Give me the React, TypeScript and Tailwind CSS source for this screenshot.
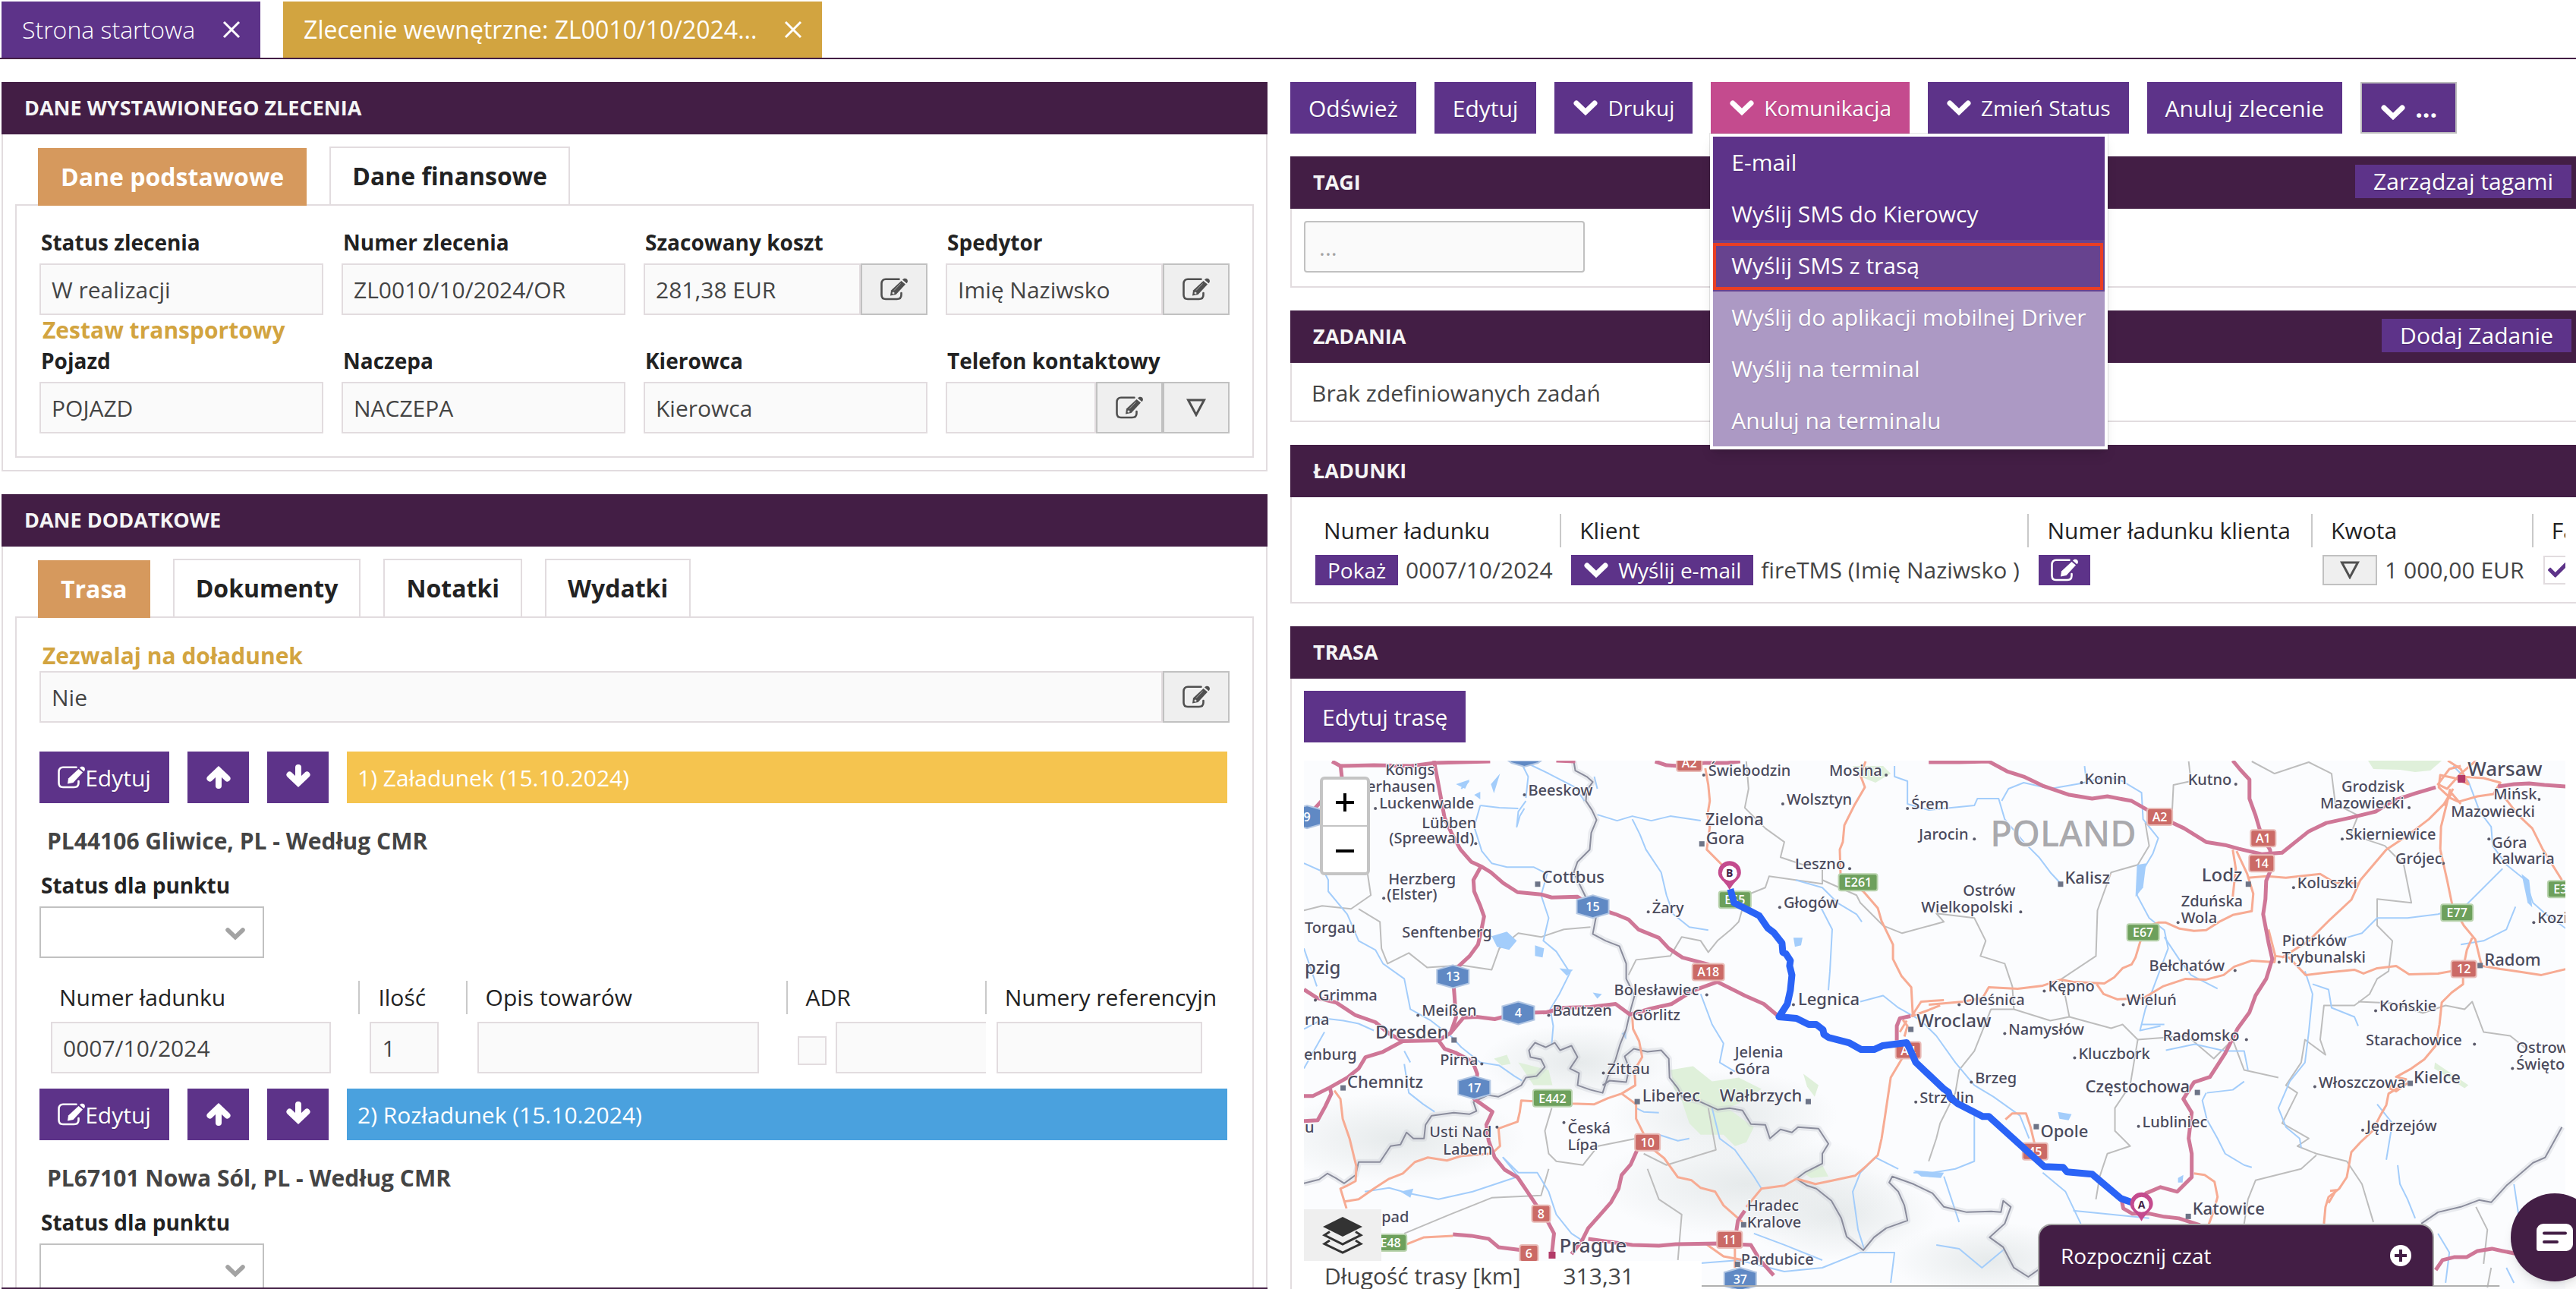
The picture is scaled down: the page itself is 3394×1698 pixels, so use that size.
import React from "react";
import { FaCheck } from "react-icons/fa";

const orderFields = [
  { id: "status", label: "Status zlecenia", value: "W realizacji", actions: [] },
  { id: "number", label: "Numer zlecenia", value: "ZL0010/10/2024/OR", actions: [] },
  { id: "cost", label: "Szacowany koszt", value: "281,38 EUR", actions: ["edit"] },
  { id: "forwarder", label: "Spedytor", value: "Imię Naziwsko", actions: ["edit"] },
];

const transportFields = [
  { id: "vehicle", label: "Pojazd", value: "POJAZD", actions: [] },
  { id: "trailer", label: "Naczepa", value: "NACZEPA", actions: [] },
  { id: "driver", label: "Kierowca", value: "Kierowca", actions: [] },
  { id: "phone", label: "Telefon kontaktowy", value: "", actions: ["edit", "more"] },
];

const menuItems = [
  { label: "E-mail", state: "normal" },
  { label: "Wyślij SMS do Kierowcy", state: "normal" },
  { label: "Wyślij SMS z trasą", state: "active" },
  { label: "Wyślij do aplikacji mobilnej Driver", state: "disabled" },
  { label: "Wyślij na terminal", state: "disabled" },
  { label: "Anuluj na terminalu", state: "disabled" },
];

// x, baseline, font size, name
const cities: [number, number, number, string][] = [
  [1825, 1022, 20, "Königs"],
  [1801, 1044, 20, "erhausen"],
  [1817, 1066, 20, "Luckenwalde"],
  [1873, 1092, 20, "Lübben"],
  [1830, 1112, 20, "(Spreewald)"],
  [2013, 1049, 20, "Beeskow"],
  [2250, 1023, 20, "Świebodzin"],
  [2409, 1023, 20, "Mosina"],
  [2353, 1061, 20, "Wolsztyn"],
  [2517, 1067, 20, "Śrem"],
  [2246, 1088, 22, "Zielona"],
  [2247, 1113, 22, "Gora"],
  [2527, 1107, 20, "Jarocin"],
  [2745, 1034, 20, "Konin"],
  [2881, 1035, 20, "Kutno"],
  [3083, 1044, 20, "Grodzisk"],
  [3055, 1066, 20, "Mazowiecki"],
  [3249, 1023, 26, "Warsaw"],
  [3283, 1054, 20, "Mińsk"],
  [3227, 1077, 20, "Mazowiecki"],
  [3088, 1107, 20, "Skierniewice"],
  [3281, 1118, 20, "Góra"],
  [3281, 1139, 20, "Kalwaria"],
  [3154, 1139, 20, "Grójec"],
  [1829, 1166, 20, "Herzberg"],
  [1827, 1186, 20, "(Elster)"],
  [2031, 1164, 22, "Cottbus"],
  [1719, 1230, 20, "Torgau"],
  [1847, 1236, 20, "Senftenberg"],
  [2176, 1204, 20, "Żary"],
  [2349, 1197, 20, "Głogów"],
  [2364, 1146, 20, "Leszno"],
  [1719, 1284, 24, "pzig"],
  [1737, 1319, 20, "Grimma"],
  [1873, 1339, 20, "Meißen"],
  [1719, 1351, 20, "rna"],
  [1812, 1368, 24, "Dresden"],
  [1718, 1396, 20, "enburg"],
  [1897, 1403, 20, "Pirna"],
  [1775, 1433, 22, "Chemnitz"],
  [2126, 1312, 20, "Bolesławiec"],
  [2045, 1339, 20, "Bautzen"],
  [2150, 1345, 20, "Görlitz"],
  [2368, 1325, 22, "Legnica"],
  [2285, 1393, 20, "Jelenia"],
  [2285, 1415, 20, "Góra"],
  [2117, 1415, 20, "Zittau"],
  [2163, 1451, 22, "Liberec"],
  [2265, 1451, 22, "Wałbrzych"],
  [2528, 1453, 20, "Strzelin"],
  [1883, 1498, 20, "Usti Nad"],
  [1901, 1521, 20, "Labem"],
  [2065, 1493, 20, "Česká"],
  [2065, 1515, 20, "Lípa"],
  [1719, 1492, 20, "u"],
  [1820, 1610, 20, "pad"],
  [2054, 1650, 26, "Prague"],
  [2301, 1595, 20, "Hradec"],
  [2301, 1617, 20, "Kralove"],
  [2293, 1666, 20, "Pardubice"],
  [2524, 1354, 24, "Wroclaw"],
  [2585, 1181, 20, "Ostrów"],
  [2530, 1203, 20, "Wielkopolski"],
  [2719, 1165, 22, "Kalisz"],
  [2899, 1162, 24, "Lodz"],
  [2872, 1195, 20, "Zduńska"],
  [2872, 1217, 20, "Wola"],
  [3025, 1171, 20, "Koluszki"],
  [3005, 1247, 20, "Piotrków"],
  [3005, 1269, 20, "Trybunalski"],
  [2830, 1280, 20, "Bełchatów"],
  [3271, 1273, 22, "Radom"],
  [2697, 1307, 20, "Kępno"],
  [2800, 1325, 20, "Wieluń"],
  [2585, 1325, 20, "Oleśnica"],
  [2645, 1363, 20, "Namysłów"],
  [3133, 1333, 20, "Końskie"],
  [2848, 1371, 20, "Radomsko"],
  [3115, 1377, 20, "Starachowice"],
  [2737, 1395, 20, "Kluczbork"],
  [3313, 1387, 20, "Ostrow"],
  [3313, 1409, 20, "Święto"],
  [2601, 1427, 20, "Brzeg"],
  [3053, 1433, 20, "Włoszczowa"],
  [3178, 1427, 22, "Kielce"],
  [2746, 1439, 22, "Częstochowa"],
  [2687, 1498, 22, "Opole"],
  [2821, 1485, 20, "Lubliniec"],
  [3116, 1490, 20, "Jędrzejów"],
  [2887, 1600, 22, "Katowice"],
  [3341, 1217, 20, "Kozi"],
];

const dots: [number, number][] = [
  [1812, 1066], [1944, 1112], [2008, 1048], [2244, 1022], [2484, 1022], [2348, 1060], [2512, 1066],
  [2600, 1106], [2741, 1032], [2944, 1034], [3172, 1065], [3084, 1106], [3277, 1106], [3217, 1138],
  [1823, 1184], [1784, 1228], [1963, 1234], [2171, 1202], [2344, 1196], [2436, 1145], [1733, 1318],
  [1868, 1338], [1952, 1402], [2248, 1311], [2040, 1338], [2362, 1324], [2280, 1414], [2112, 1414],
  [2523, 1452], [2060, 1479], [1972, 1485], [2661, 1202], [2868, 1216], [3020, 1170], [3001, 1268],
  [2943, 1279], [2692, 1306], [2796, 1324], [2580, 1324], [2640, 1362], [3128, 1332], [2958, 1370],
  [3258, 1376], [2732, 1394], [3308, 1408], [2596, 1426], [3048, 1432], [2816, 1484], [3111, 1489],
  [3336, 1216], [3343, 1054],
];

const towns: [number, number][] = [
  [2025, 1165], [2241, 1112], [1769, 1433], [2156, 1451], [2381, 1451], [2296, 1613], [2288, 1665],
  [2516, 1356], [2713, 1165], [2960, 1165], [3265, 1272], [3173, 1427], [2893, 1439], [2681, 1484],
  [2881, 1602], [1915, 1370],
];

// x, y, label, kind
const shields: [number, number, string, string][] = [
  [2225, 1006, "A2", "red"],
  [2844, 1077, "A2", "red"],
  [2980, 1105, "A1", "red"],
  [2978, 1138, "14", "red"],
  [2250, 1281, "A18", "red"],
  [2170, 1505, "10", "red"],
  [2030, 1599, "8", "red"],
  [2014, 1651, "6", "red"],
  [2278, 1633, "11", "red"],
  [2513, 1384, "A4", "red"],
  [3244, 1277, "12", "red"],
  [2680, 1517, "45", "red"],
  [2447, 1163, "E261", "green"],
  [2285, 1186, "E65", "green"],
  [2045, 1447, "E442", "green"],
  [1832, 1637, "E48", "green"],
  [2822, 1229, "E67", "green"],
  [3235, 1203, "E77", "green"],
  [3371, 1172, "E3", "green"],
  [2098, 1195, "15", "blue"],
  [1914, 1287, "13", "blue"],
  [2000, 1335, "4", "blue"],
  [1942, 1433, "17", "blue"],
  [1722, 1077, "9", "blue"],
  [2292, 1685, "37", "blue"],
];

const shieldColors: Record<string, string> = { red: "#cb6a66", green: "#6da05c", blue: "#6089c4" };

const motorways = [
  "M1889 1003L1896 1040L1903 1078L1912 1098L1924 1120L1938 1136L1951 1142L1964 1150L1980 1164L1999 1176L2030 1179L2044 1183L2078 1182L2098 1195L2128 1205L2145 1212L2158 1225L2185 1236L2198 1250L2216 1262L2250 1271L2262 1294L2298 1312L2323 1323L2342 1339",
  "M1951 1142L1941 1160L1942 1175L1950 1194L1955 1208L1951 1228L1947 1245L1936 1260L1922 1273L1914 1287L1916 1312L1918 1341L1911 1361",
  "M1718 1304L1735 1315L1760 1321L1786 1338L1812 1347L1830 1362L1848 1372L1895 1371L1911 1361L1928 1341L1945 1340L1969 1343L2000 1335L2037 1334L2060 1328L2095 1327L2128 1323L2147 1337L2175 1329L2202 1323L2229 1306L2262 1294",
  "M1718 1444L1730 1444L1752 1433L1775 1420L1790 1408L1799 1393L1822 1386L1848 1372",
  "M1718 1477L1736 1476L1746 1458L1754 1441L1752 1433",
  "M1895 1371L1903 1382L1917 1387L1940 1399L1946 1415L1942 1448L1966 1465L1958 1482L1961 1503L1969 1525L1982 1541L1999 1551L2012 1570L2024 1588L2037 1606L2047 1625L2044 1653",
  "M1914 1626L1938 1628L1961 1632L1974 1643L2014 1648",
  "M2156 1516L2148 1534L2136 1548L2132 1566L2122 1584L2108 1600L2092 1618L2084 1634L2070 1652",
  "M2092 1632L2150 1640L2185 1641L2207 1639L2265 1638L2306 1640L2318 1660L2336 1680",
  "M2287 1621L2289 1608L2298 1595",
  "M2516 1339L2502 1342L2498 1352L2498 1371",
  "M2940 1003L2950 1015L2962 1028L2962 1053L2970 1075L2975 1092L2980 1105L2989 1120L2992 1142L2984 1161L2983 1185L2980 1205L2987 1242L2992 1264L2984 1290L2970 1312L2962 1334L2946 1356L2930 1388L2910 1419L2889 1426L2875 1448L2886 1466L2882 1500L2886 1520L2886 1551L2867 1570L2845 1564L2826 1572L2812 1588",
  "M2794 1582L2796 1592L2808 1599L2831 1599L2850 1603L2869 1605L2897 1614",
  "M2540 1005L2580 1005L2619 1004L2643 1017L2665 1024L2690 1036L2725 1048L2755 1053L2775 1050L2807 1056L2844 1077L2876 1092L2905 1110L2930 1114L2948 1119L2978 1126L3005 1124L3020 1112L3040 1096L3063 1085L3095 1078L3128 1070L3150 1056L3180 1046L3207 1038",
  "M3289 1037L3310 1034L3330 1033L3350 1035L3379 1037",
  "M1755 1004L1766 1010L1810 1009L1859 1010L1890 1006L1963 1004M2050 1003L2075 1004",
  "M2180 1004L2195 1009L2210 1010L2245 1006L2275 1006L2292 1004",
  "M1766 1008L1768 1026L1745 1052L1732 1066",
  "M3207 1673L3216 1660L3232 1656L3248 1656L3262 1648L3281 1645L3295 1648L3320 1653",
];

const trunkRoads = [
  "M2246 1013L2250 1035L2252 1056L2249 1074L2252 1090L2248 1120L2270 1142L2279 1170",
  "M2457 1004L2450 1022L2456 1038L2442 1062L2429 1088L2427 1110L2423 1120L2424 1153L2454 1175L2473 1197L2478 1214L2493 1245L2493 1264L2504 1286L2517 1301L2519 1337",
  "M2513 1384L2506 1393L2490 1420L2482 1474L2478 1500L2473 1522L2458 1536L2443 1549L2415 1555L2391 1560L2366 1553L2350 1562L2320 1566L2300 1590",
  "M2150 1340L2151 1356L2159 1372L2163 1393L2153 1410L2154 1430L2136 1441L2118 1447L2100 1455L2070 1454L2004 1450L2002 1465L1999 1478L1974 1487L1976 1510L1965 1520L1925 1523L1906 1529L1881 1525L1864 1531L1848 1546L1830 1553L1810 1566L1790 1580L1771 1583",
  "M2136 1441L2155 1455L2155 1474L2166 1496L2172 1510L2192 1526L2210 1551L2228 1555L2240 1565L2259 1570L2270 1588L2295 1610",
  "M1758 1437L1766 1448L1769 1474L1778 1500L1787 1537L1786 1556L1775 1562L1766 1566L1774 1592",
  "M1851 1640L1876 1630L1914 1628",
  "M2246 1638L2270 1655L2296 1660M2285 1645L2285 1670",
  "M2940 1120L2944 1145L2940 1182M2945 1122L2959 1152L2967 1178L2965 1201L2940 1206L2924 1214L2905 1226L2889 1227L2870 1224L2852 1216L2842 1216L2825 1222L2818 1242L2812 1262L2807 1271L2795 1276L2784 1288L2771 1296L2730 1294L2714 1291L2690 1299L2657 1303L2619 1301L2611 1315L2585 1320L2540 1324",
  "M2761 1297L2770 1310L2788 1317L2823 1315L2848 1300L2878 1290L2905 1291L2928 1285L2942 1274L2965 1266L2995 1268L2996 1260L3014 1262L3036 1285L3060 1282L3100 1278L3112 1283L3130 1276L3155 1273L3172 1284L3210 1283L3244 1277M3262 1272L3292 1277L3320 1281L3346 1285L3379 1277",
  "M2987 1225L2996 1260M3005 1262L3040 1240L3068 1212L3096 1186L3108 1160L3125 1140L3142 1120L3172 1100L3198 1080L3218 1060L3230 1040",
  "M2960 1157L2985 1155L3010 1157L3055 1152L3075 1164L3104 1164",
  "M2518 1339L2540 1331L2555 1325M2517 1340L2530 1320L2560 1318",
  "M3213 1120L3222 1160L3229 1194L3244 1220L3259 1238L3267 1271M3255 1236L3248 1252L3243 1277L3243 1297L3228 1308L3215 1321L3212 1350L3207 1378L3192 1396L3175 1408L3155 1419L3168 1422L3160 1432L3145 1441L3142 1456L3134 1470L3124 1490L3108 1505L3096 1518L3090 1551L3080 1566L3066 1577L3062 1590L3060 1612",
  "M3170 1427L3155 1438L3146 1434L3150 1425M3068 1569L3076 1568L3066 1585",
  "M2889 1546L2903 1548L2916 1557L2920 1577L2914 1598L2908 1614",
  "M3223 1003L3240 1014L3250 1034L3232 1026L3213 1022L3211 1038L3226 1052L3237 1057L3262 1050L3283 1047L3292 1032L3270 1026L3240 1024M3260 1003L3240 1020L3222 1040L3210 1034L3225 1014L3240 1010M3226 1040L3221 1062L3214 1090L3213 1120M3295 1048L3316 1075L3334 1092L3348 1120L3373 1160M3218 1062L3228 1046L3240 1060",
  "M2641 1475L2650 1467L2668 1467L2674 1485L2680 1510",
  "M2511 1345L2502 1360M2506 1344L2512 1352L2508 1366",
];

const rivers = [
  "M2005 1008L2013 1024L2010 1052M2010 1056L2000 1070L1998 1090L2002 1076L2008 1066M1925 1040L1935 1030M1950 1062L1942 1090L1952 1122L1965 1138L1985 1143L2020 1143L2038 1152L2030 1180L2040 1210L2033 1240L2050 1254L2068 1282L2054 1310L2042 1330L2046 1352L2044 1376",
  "M1950 1062L1975 1065L2000 1066M2015 1008L2040 1020L2075 1038L2087 1056",
  "M2100 1024L2104 1040M2104 1074L2130 1082L2150 1076L2175 1082L2200 1076L2240 1082M2150 1080L2160 1100L2168 1120L2188 1150L2195 1180L2204 1205L2225 1222L2250 1226",
  "M1718 1138L1745 1150L1750 1160L1750 1175L1775 1205L1790 1240L1812 1252L1822 1270L1850 1290L1858 1330L1885 1345L1912 1366L1925 1380L1950 1400L1975 1404L1995 1418L2005 1424",
  "M1858 1400L1850 1385M1850 1402L1856 1440L1875 1455L1890 1465",
  "M1718 1356L1745 1342L1770 1345L1790 1349L1810 1358M1718 1408L1745 1360M1718 1250L1735 1300",
  "M1798 1570L1830 1565L1855 1572L1895 1580L1940 1570L1970 1560L2000 1550L1980 1525L2000 1545L2025 1545L2040 1570L2050 1600L2070 1625L2090 1638",
  "M2240 1310L2255 1350L2270 1375L2265 1400L2285 1412M2255 1460L2265 1500L2285 1515L2310 1550L2320 1566",
  "M2365 1160L2400 1170L2420 1190L2445 1205L2452 1215M2395 1190L2413 1225L2410 1280L2408 1305M2450 1320L2480 1312L2500 1328L2530 1345L2550 1365L2575 1400L2600 1430L2625 1445L2660 1470L2672 1500",
  "M2495 1010L2495 1024L2512 1030L2512 1060L2540 1068L2600 1062L2604 1053L2632 1053L2640 1080L2665 1110L2685 1130L2700 1150L2714 1165",
  "M2745 1010L2748 1034M2636 1056L2645 1040L2665 1032L2700 1040L2740 1033L2775 1024L2795 1030L2820 1045L2822 1080L2842 1105L2835 1125L2820 1150L2814 1180L2830 1210L2850 1226L2855 1250L2840 1290L2825 1330L2818 1358L2845 1352",
  "M2850 1235L2870 1265L2885 1285L2920 1303M2820 1350L2850 1350",
  "M3230 1010L3250 1030L3265 1070L3280 1090L3282 1115L3300 1140L3325 1160L3335 1190L3352 1205L3380 1225",
  "M3295 1145L3270 1170L3245 1195L3210 1205L3170 1210L3130 1210L3110 1230L3075 1240M3312 1195L3300 1225L3270 1240L3240 1245",
  "M3035 1280L3045 1310L3040 1360L3035 1400L3015 1425L3000 1460L3010 1485L3028 1500L3030 1512M3045 1297L3066 1304L3070 1328L3100 1340L3105 1352",
  "M2905 1440L2900 1450L2906 1475L2920 1500L2930 1520L2955 1535L2965 1538M2906 1440L2940 1436L2955 1425M2852 1384L2890 1376L2930 1385L2955 1385L2960 1410",
  "M3130 1455L3150 1480L3145 1510L3142 1528M3157 1535L3160 1560L3170 1580L3180 1605",
  "M2600 1470L2600 1530L2575 1540L2545 1545L2520 1545M2560 1550L2580 1610M2690 1545L2720 1570L2740 1612M2730 1595L2780 1600L2830 1605M2500 1540L2470 1525L2450 1545L2440 1570L2447 1620L2455 1645",
  "M2240 1664L2290 1660L2350 1675L2400 1670L2450 1650L2495 1650L2490 1690M2310 1625L2350 1640L2400 1660",
  "M2550 1640L2580 1645L2610 1670L2640 1645",
  "M3210 1625L3225 1650L3220 1690M3310 1560L3316 1600M3300 1670L3310 1690",
  "M2155 1460L2165 1465L2185 1466M2185 1495L2210 1503L2225 1500",
];

const countryBorders = [
  "M2073 1004L2075 1016L2090 1024L2098 1031L2090 1042L2089 1056L2097 1068L2103 1081L2096 1098L2094 1120L2078 1136L2073 1150L2090 1185L2103 1205L2098 1231L2115 1240L2133 1247L2142 1270L2142 1290L2153 1312L2148 1330L2142 1356L2134 1376L2128 1396L2118 1418L2111 1440L2095 1436L2078 1430L2080 1414L2068 1408L2078 1393L2070 1378L2055 1384L2048 1374L2036 1380L2022 1374L2014 1384L2016 1393L2030 1396L2035 1406L2024 1418L2010 1420L2004 1430L1985 1440L1974 1445L1960 1443L1941 1452L1945 1464L1936 1468L1915 1466L1886 1470L1878 1482L1876 1500L1862 1500L1853 1492L1845 1508L1832 1510L1818 1531L1790 1531L1786 1548L1771 1559L1760 1552L1749 1546L1738 1554L1718 1559",
  "M2111 1430L2120 1424L2142 1426L2146 1408L2140 1392L2152 1382L2170 1386L2188 1384L2198 1395L2199 1420L2210 1434L2216 1446L2240 1452L2262 1462L2278 1460L2295 1463L2306 1481L2325 1482L2331 1500L2345 1488L2360 1492L2368 1485L2395 1487L2408 1507L2400 1520L2400 1533L2378 1544L2366 1553L2380 1562L2392 1566L2412 1582L2425 1605L2432 1629L2454 1647L2468 1630L2484 1618L2512 1608L2508 1588L2500 1570L2488 1558L2492 1550L2520 1560L2545 1572L2560 1590L2590 1597L2622 1596L2635 1597L2638 1582L2648 1590L2640 1612L2620 1630L2638 1643L2652 1670L2671 1682L2688 1670",
  "M3188 1612L3210 1597L3240 1590L3264 1581L3280 1584L3300 1562L3313 1551L3335 1532L3351 1525L3362 1505L3373 1485",
];

const regionBorders = [
  "M1718 1200L1742 1194L1780 1198L1806 1180L1800 1140M1790 1198L1818 1215L1820 1250L1828 1270L1856 1256L1880 1275L1925 1272L1965 1278L1975 1250L2000 1230L2030 1235L2060 1225L2095 1222",
  "M2300 1004L2303 1040L2298 1065L2325 1092L2350 1110L2345 1130L2375 1140L2400 1135L2400 1165L2330 1155L2325 1170L2300 1180L2290 1215L2280 1225L2262 1240L2250 1255L2240 1240L2215 1235L2200 1260L2155 1265L2145 1285",
  "M2400 1160L2445 1180L2450 1190L2480 1220L2505 1230L2560 1215L2550 1204L2600 1210L2615 1240L2608 1260L2640 1270L2650 1300L2652 1330L2622 1330L2600 1385L2580 1410L2575 1440L2555 1480L2550 1500L2540 1530",
  "M2652 1330L2700 1345L2725 1340L2780 1355L2795 1350L2815 1370L2810 1400L2805 1430L2785 1460L2785 1490L2805 1510L2775 1520L2765 1550L2760 1580",
  "M2725 1340L2715 1290L2760 1260L2762 1200L2780 1150L2815 1140L2830 1115L2825 1085L2860 1075L2862 1035L2885 1030L2882 1004",
  "M2965 1004L2995 1020L3040 1005L3070 1020L3075 1060L3105 1075L3095 1100L3140 1115L3165 1140L3175 1190L3130 1185L3130 1220L3150 1240L3145 1280L3130 1290L3120 1310L3100 1325L3060 1325L3055 1370L3062 1390L3035 1370L3030 1400L3010 1430L3025 1440L3005 1480L3040 1500L3025 1510L3050 1520L3090 1530L3110 1560L3125 1610",
  "M2815 1370L2880 1365L2915 1395L2940 1370L2955 1410L3000 1420M3050 1522L3030 1540L2970 1555L2960 1580L2955 1612",
  "M3105 1320L3150 1322L3190 1335L3220 1325L3245 1330L3255 1320L3270 1360L3305 1365L3330 1385",
  "M2044 1460L2035 1490L2040 1520L2050 1530L2085 1535L2105 1510L2155 1500M2040 1540L2030 1575L1965 1578L1910 1600L1850 1625M2165 1520L2195 1535L2260 1515L2250 1460M2170 1540L2185 1580L2215 1600L2210 1660",
  "M3270 1665L3275 1620L3260 1590M3280 1670L3275 1696",
];

const parks = [
  "M2200 1410L2230 1405L2255 1425L2290 1420L2320 1435L2300 1450L2275 1460L2310 1485L2300 1505L2285 1510L2270 1495L2240 1495L2225 1480L2215 1450L2205 1435Z",
  "M2000 1400L2040 1410L2045 1430L2020 1430Z",
  "M1968 1395L1985 1390L1990 1402L1978 1404Z",
  "M2440 1010L2480 1010L2490 1020L2470 1032L2450 1024Z",
  "M3118 1003L3215 1003L3200 1016L3180 1018L3160 1015L3125 1014Z",
  "M3206 1400L3250 1430L3245 1434L3205 1408Z",
  "M2375 1545L2400 1535L2408 1550L2385 1552Z",
  "M2375 1415L2395 1430L2390 1445L2380 1432Z",
];

const lakes = [
  "M1965 1234L1985 1228L1998 1240L1988 1252L1972 1248Z",
  "M2022 1246L2034 1250L2032 1262L2022 1260Z",
  "M2054 1276L2072 1278L2064 1286Z",
  "M2098 1308L2110 1310L2104 1316Z",
  "M2814 1140L2826 1138L2822 1170L2812 1182Z",
  "M2710 1465L2728 1468L2724 1476L2712 1474Z",
  "M2520 1542L2560 1545L2556 1552L2530 1550Z",
  "M2362 1236L2374 1236L2372 1246L2364 1248Z",
  "M1845 1570L1862 1566L1858 1578Z",
  "M2136 1362L2142 1358L2142 1370Z",
  "M2868 1552L2875 1548L2874 1558L2868 1558Z",
  "M3320 1152L3330 1160L3334 1196L3328 1190Z",
  "M1918 1034L1936 1028L1930 1040ZM1942 1048L1950 1044L1950 1054ZM1964 1034L1976 1020L1968 1046Z",
];

// soft relief of the mountain ranges along the southern border
const hills: [number, number, number, number][] = [
  [1840, 1500, 170, 60],
  [2080, 1400, 130, 50],
  [2270, 1470, 150, 60],
  [2420, 1600, 130, 60],
  [2620, 1660, 130, 50],
  [2300, 1560, 200, 70],
];

const EditIcon = () => (
  <svg width="36" height="30" viewBox="0 0 36 30" fill="none" aria-hidden="true">
    <path d="M24.500 1.800H7C3.500 1.800 1.500 4 1.500 7.500V22.500C1.500 26 3.500 28 7 28H21.500C25.500 28 27.500 26 27.500 22.500V20" stroke="currentColor" strokeWidth="2.600" strokeLinecap="round" />
    <path d="M27.500 4L33 8.500L20.500 22L13 23.500L14 16.500Z" fill="currentColor" />
    <path d="M29 2.500C30.500 .3 33.500 .2 35 1.800C36.400 3.400 36.200 5.600 34.500 7.200L29 2.500Z" fill="currentColor" />
    <path d="M18 16.500L26.500 7.500" stroke="#fff" strokeOpacity=".5" strokeWidth="1" />
    <circle cx="17" cy="20" r="1.500" fill="#fff" fillOpacity=".8" />
  </svg>
);

const TriangleIcon = () => (
  <svg width="26" height="24" viewBox="0 0 26 24" fill="none" aria-hidden="true">
    <path d="M2.500 2H23.500L13 21.500Z" stroke="currentColor" strokeWidth="3" />
  </svg>
);

const CloseIcon = () => (
  <svg width="24" height="24" viewBox="0 0 24 24" aria-hidden="true">
    <path d="M2 2L22 22M22 2L2 22" stroke="currentColor" strokeWidth="3" />
  </svg>
);

const ChevronIcon = ({ className = "h-[22px] w-[34px]" }) => (
  <svg className={`shrink-0 ${className}`} viewBox="0 0 34 22" fill="none" aria-hidden="true">
    <path d="M5 5L17 16.500L29 5" stroke="currentColor" strokeWidth="7" strokeLinecap="round" />
  </svg>
);

const ArrowIcon = ({ down = false }) => (
  <svg className={down ? "mb-1 rotate-180" : ""} width="32" height="32" viewBox="0 0 32 32" fill="none" aria-hidden="true">
    <path d="M16 27V9M4.500 17.500L16 6.500L27.500 17.500" stroke="currentColor" strokeWidth="8" strokeLinecap="round" />
  </svg>
);

const ActionButton = ({ children, label = undefined, className = "px-6" }: any) => (
  <button aria-label={label} className={`flex h-[68px] shrink-0 items-center justify-center whitespace-nowrap bg-[#5d3389] text-white text-shadow-xs ${className}`}>
    {children}
  </button>
);

const FieldButton = ({ kind }: { kind: string }) => (
  <button
    aria-label={kind === "edit" ? "Edytuj" : "Rozwiń"}
    className="flex h-[68px] w-[88px] shrink-0 items-center justify-center border-2 border-[#c1c1c1] bg-[#efefef] text-[#505050]"
  >
    {kind === "edit" ? <EditIcon /> : <TriangleIcon />}
  </button>
);

const Field = ({ id, label, value, actions }: any) => (
  <div className="min-w-0">
    <label htmlFor={id} className="mb-2 block pl-[2px] text-[28px] leading-10 font-bold text-[#222]">
      {label}
    </label>
    <div className="flex">
      <input id={id} readOnly defaultValue={value} className="h-[68px] w-full min-w-0 flex-1 border-2 border-[#e2dcdf] bg-[#fafafa] px-[14px]" />
      {actions.map((kind: string) => (
        <FieldButton key={kind} kind={kind} />
      ))}
    </div>
  </div>
);

const PanelHeader = ({ title, action = undefined }: { title: string; action?: string }) => (
  <div className="flex h-[69px] items-center justify-between bg-[#431e45] pr-[6px] pl-[30px]">
    <h2 className="text-[27px] font-bold text-[#f5f5f5]">{title}</h2>
    {action && <button className="mb-1 h-11 bg-[#5d3389] px-6 leading-10 text-white text-shadow-xs">{action}</button>}
  </div>
);

const Tabs = ({ items }: { items: string[] }) => (
  <div role="tablist" className="flex gap-[30px] px-[30px] text-[32px] font-bold">
    {items.map((item, i) =>
      i === 0 ? (
        <button key={item} role="tab" aria-selected="true" className="relative -mb-[2px] mt-[2px] h-[76px] bg-[#d6995d] px-[30px] text-white">
          {item}
        </button>
      ) : (
        <button key={item} role="tab" aria-selected="false" className="h-[76px] border-2 border-b-0 border-[#e2dcdf] bg-white px-7 text-[#222]">
          {item}
        </button>
      )
    )}
  </div>
);

const RoutePoint = ({ index, title, color, address }: any) => (
  <>
    <div className="flex gap-6 pr-[3px]">
      <ActionButton className="w-[171px]">
        <EditIcon />
        Edytuj
      </ActionButton>
      <ActionButton className="w-[81px]" label="W górę">
        <ArrowIcon />
      </ActionButton>
      <ActionButton className="w-[81px]" label="W dół">
        <ArrowIcon down />
      </ActionButton>
      <div className={`flex h-[68px] flex-1 items-center px-[14px] text-white ${color}`}>{title}</div>
    </div>
    <p className="mt-[30px] pl-[10px] leading-10 font-bold">{address}</p>
    <label htmlFor={`point-${index}`} className="mt-[18px] mb-2 block pl-[2px] text-[28px] leading-10 font-bold text-[#222]">
      Status dla punktu
    </label>
    <div className="relative w-[296px]">
      <select id={`point-${index}`} className="block h-[68px] w-full appearance-none border-2 border-[#c1c1c1] bg-white px-4">
        <option></option>
      </select>
      <ChevronIcon className="pointer-events-none absolute top-[26px] right-6 h-5 w-7 text-[#a3a3a3]" />
    </div>
  </>
);

const RouteMap = () => (
  <svg className="absolute inset-0 h-full w-full" viewBox="1718 1003 1662 695" preserveAspectRatio="xMinYMin slice" role="img" aria-label="Mapa trasy">
    <defs>
      <radialGradient id="relief">
        <stop offset="0" stopColor="#e6eaeb" />
        <stop offset="1" stopColor="#e6eaeb" stopOpacity="0" />
      </radialGradient>
    </defs>
    <rect x="1718" y="1003" width="1662" height="695" fill="#fbfcfe" />
    {hills.map(([x, y, rx, ry]) => <ellipse key={`${x}-${y}`} cx={x} cy={y} rx={rx} ry={ry} fill="url(#relief)" />)}
    <g fill="#dff0da">{parks.map((d) => <path key={d} d={d} />)}</g>
    <g fill="none" strokeLinejoin="round">
      <g stroke="#bdbdbd" strokeWidth="2">{regionBorders.map((d) => <path key={d} d={d} />)}</g>
      <g stroke="#a3cdfb" strokeWidth="2">{rivers.map((d) => <path key={d} d={d} />)}</g>
      <g fill="#a3cdfb">{lakes.map((d) => <path key={d} d={d} />)}</g>
      <g stroke="#c9ccd4" strokeOpacity=".35" strokeWidth="8">{countryBorders.map((d) => <path key={d} d={d} />)}</g>
      <g stroke="#8a8c9c" strokeWidth="2">{countryBorders.map((d) => <path key={d} d={d} />)}</g>
      <g stroke="#f7ab93" strokeWidth="3">{trunkRoads.map((d) => <path key={d} d={d} />)}</g>
      <g stroke="#cf7797" strokeWidth="5">{motorways.map((d) => <path key={d} d={d} />)}</g>
    </g>
    <path d="M1987 1003H2030L2026 1006L2008 1011L1991 1006Z" fill="#6089c4" stroke="#b4c8e4" strokeWidth="2" />
    <rect x="3236" y="1022" width="10" height="10" fill="#b23a68" />
    <rect x="2040" y="1649" width="9" height="9" fill="#b23a68" />
    <g fill="#6d7487">{towns.map(([x, y]) => <rect key={`${x}-${y}`} x={x - 3} y={y - 3} width="7" height="7" />)}</g>
    <g fill="#5a5a6a">{dots.map(([x, y]) => <circle key={`${x}-${y}`} cx={x} cy={y} r="2" />)}</g>
    <g fill="#4a4a5c" stroke="#fbfcfe" strokeWidth="2" paintOrder="stroke" fontWeight="500" fontFamily="'Noto Sans', 'Open Sans', sans-serif">
      {cities.map(([x, y, size, name]) => (
        <text key={`${x}-${y}`} x={x} y={y} fontSize={size}>{name}</text>
      ))}
      <text x="2621" y="1116" fontSize="47" fill="#a9a9ad">POLAND</text>
    </g>
    {shields.map(([x, y, label, kind]) => {
      const w = label.length * 9 + 15;
      return (
        <g key={`${x}-${y}`}>
          {kind === "blue" ? (
            <path d={`M${x} ${y - 15}L${x + 21} ${y - 9}V${y + 9}L${x} ${y + 15}L${x - 21} ${y + 9}V${y - 9}Z`} fill={shieldColors[kind]} stroke="#b4c8e4" strokeWidth="2" />
          ) : (
            <rect x={x - w / 2} y={y - 11} width={w} height="22" rx="3" fill={shieldColors[kind]} stroke={kind === "red" ? "#e9bcb8" : "#b9d3ae"} strokeWidth="2" />
          )}
          <text x={x} y={y + 6} fontSize="16" fontWeight="600" fill="#fff" textAnchor="middle" fontFamily="'Open Sans', sans-serif">{label}</text>
        </g>
      );
    })}
    <path
      d="M2279 1172L2284 1190L2317 1207L2328 1223L2336 1229L2347 1243L2348 1255L2352 1257L2358 1266L2357 1273L2360 1285L2358 1305L2354 1323L2343 1340L2366 1342L2382 1350L2392 1350L2401 1357L2402 1363L2408 1367L2435 1374L2451 1383L2468 1383L2479 1378L2511 1374L2516 1384L2523 1400L2560 1435L2566 1439L2568 1446L2578 1454L2611 1471L2619 1471L2692 1537L2717 1538L2722 1544L2755 1547L2793 1579L2818 1588"
      fill="none"
      stroke="#2a63f6"
      strokeWidth="9"
      strokeLinejoin="round"
    />
    {[{ x: 2278, y: 1173, name: "B" }, { x: 2820, y: 1609, name: "A" }].map((pin) => (
      <g key={pin.name}>
        <path d={`M${pin.x} ${pin.y}C${pin.x - 6} ${pin.y - 12} ${pin.x - 15} ${pin.y - 14} ${pin.x - 15} ${pin.y - 23}A15 15 0 0 1 ${pin.x + 15} ${pin.y - 23}C${pin.x + 15} ${pin.y - 14} ${pin.x + 6} ${pin.y - 12} ${pin.x} ${pin.y}Z`} fill="#c44b8e" />
        <circle cx={pin.x} cy={pin.y - 22} r="10" fill="#fff" />
        <text x={pin.x} y={pin.y - 17} fontSize="14" fontWeight="700" fill="#431e45" textAnchor="middle" fontFamily="'Open Sans', sans-serif">{pin.name}</text>
      </g>
    ))}
    <path d="M2148 1694H3291" stroke="#b0b0b0" strokeWidth="2" />
  </svg>
);

const App = () => {
  return (
    <div className="relative flex h-screen flex-col overflow-hidden bg-white font-['Open_Sans',sans-serif] text-[30px] text-[#444]">
      {/* Open documents */}
      <header className="flex gap-[30px] border-b-2 border-[#431e45] pt-[2px] pl-[2px] text-[32px]">
        <div className="flex h-[74px] items-center gap-9 bg-[#5d3389] pr-[26px] pl-[27px] text-white">
          <a href="#start" className="font-light">Strona startowa</a>
          <button aria-label="Zamknij"><CloseIcon /></button>
        </div>
        <div className="flex h-[74px] items-center gap-9 bg-[#d2a440] pr-[26px] pl-[27px] text-white">
          <a href="#order">Zlecenie wewnętrzne: ZL0010/10/2024...</a>
          <button aria-label="Zamknij"><CloseIcon /></button>
        </div>
      </header>

      <main className="grid min-h-0 flex-1 grid-cols-[1668fr_1694fr] gap-x-[30px] pt-[30px] pl-[2px]">
        {/* Left column */}
        <div className="flex min-h-0 min-w-0 flex-col gap-[30px] overflow-hidden border-b-2 border-b-[#431e45]">
          <section>
            <PanelHeader title="DANE WYSTAWIONEGO ZLECENIA" />
            <div className="border-2 border-t-0 border-[#e2dcdf] px-4 py-4">
              <Tabs items={["Dane podstawowe", "Dane finansowe"]} />
              <div className="border-2 border-[#e2dcdf] px-[30px] pt-7 pb-[30px]">
                <div className="grid grid-cols-4 gap-6">
                  {orderFields.map((field) => <Field key={field.id} {...field} />)}
                </div>
                <h3 className="pl-1 leading-10 font-bold text-[#d2a440]">Zestaw transportowy</h3>
                <div className="grid grid-cols-4 gap-6">
                  {transportFields.map((field) => <Field key={field.id} {...field} />)}
                </div>
              </div>
            </div>
          </section>

          <section>
            <PanelHeader title="DANE DODATKOWE" />
            <div className="border-2 border-y-0 border-[#e2dcdf] px-4 pt-4">
              <Tabs items={["Trasa", "Dokumenty", "Notatki", "Wydatki"]} />
              <div className="border-2 border-b-0 border-[#e2dcdf] px-[30px] pt-[30px] pb-8">
                <label htmlFor="extra-load" className="block pl-1 leading-10 font-bold text-[#d2a440]">Zezwalaj na doładunek</label>
                <div className="mb-[38px] flex">
                  <input id="extra-load" readOnly defaultValue="Nie" className="h-[68px] min-w-0 flex-1 border-2 border-[#e2dcdf] bg-[#fafafa] px-[14px]" />
                  <FieldButton kind="edit" />
                </div>

                <RoutePoint index={1} title="1) Załadunek (15.10.2024)" color="bg-[#f5c44f]" address="PL44106 Gliwice, PL - Według CMR" />

                <table className="mt-[30px] mb-5 w-[99%] table-fixed text-left">
                  <colgroup>
                    <col className="w-[27.1%]" />
                    <col className="w-[9.1%]" />
                    <col className="w-[27.2%]" />
                    <col className="w-[16.9%]" />
                    <col />
                  </colgroup>
                  <thead className="text-[#222]">
                    <tr className="h-11">
                      {["Numer ładunku", "Ilość", "Opis towarów", "ADR", "Numery referencyjn"].map((name) => (
                        <th key={name} className="overflow-hidden border-l-2 border-[#c9c9c9] pl-6 leading-10 font-normal whitespace-nowrap first:border-transparent">
                          {name}
                        </th>
                      ))}
                    </tr>
                  </thead>
                  <tbody>
                    <tr>
                      <td className="pt-[10px] pr-[37px] pl-[14px]">
                        <input aria-label="Numer ładunku" readOnly defaultValue="0007/10/2024" className="block h-[68px] w-full border-2 border-[#e2dcdf] bg-[#fafafa] px-[14px]" />
                      </td>
                      <td className="pt-[10px] pr-[37px] pl-[14px]">
                        <input aria-label="Ilość" readOnly defaultValue="1" className="block h-[68px] w-full border-2 border-[#e2dcdf] bg-[#fafafa] px-[14px]" />
                      </td>
                      <td className="pt-[10px] pr-[37px] pl-[14px]">
                        <input aria-label="Opis towarów" readOnly className="block h-[68px] w-full border-2 border-[#e2dcdf] bg-[#fafafa] px-[14px]" />
                      </td>
                      <td className="pt-[10px] pl-[14px]">
                        <div className="flex items-center gap-3">
                          <input type="checkbox" aria-label="ADR" className="mt-2 size-[38px] shrink-0 appearance-none border-2 border-[#e2dcdf] bg-[#fafafa]" />
                          <input aria-label="Opis ADR" readOnly className="block h-[68px] w-full min-w-0 border-2 border-r-0 border-[#e2dcdf] bg-[#fafafa] px-[14px]" />
                        </div>
                      </td>
                      <td className="pt-[10px] pr-5 pl-[14px]">
                        <input aria-label="Numery referencyjne" readOnly className="block h-[68px] w-full border-2 border-[#e2dcdf] bg-[#fafafa] px-[14px]" />
                      </td>
                    </tr>
                  </tbody>
                </table>

                <RoutePoint index={2} title="2) Rozładunek (15.10.2024)" color="bg-[#4aa1de]" address="PL67101 Nowa Sól, PL - Według CMR" />
              </div>
            </div>
          </section>
        </div>

        {/* Right column */}
        <div className="flex min-h-0 min-w-0 flex-col gap-[30px]">
          <div className="flex gap-6">
            <ActionButton>Odśwież</ActionButton>
            <ActionButton>Edytuj</ActionButton>
            <ActionButton className="gap-3 px-6 text-[28px]"><ChevronIcon />Drukuj</ActionButton>
            <div className="relative">
              <button className="flex h-[68px] items-center gap-3 bg-[#c44b8e] px-6 text-[28px] text-white text-shadow-xs">
                <ChevronIcon />Komunikacja
              </button>
              <ul className="absolute top-[68px] -left-[1px] z-10 border-4 border-white bg-white whitespace-nowrap text-white shadow-lg ring-1 ring-black/10">
                {menuItems.map((item) => (
                  <li key={item.label}>
                    {item.state === "active" ? (
                      <button className="flex h-[68px] w-full bg-[#67438f] pt-1 pr-[2px] pb-[2px]">
                        <span className="flex h-full w-full items-center border-4 border-[#e93e24] px-5 pb-1">{item.label}</span>
                      </button>
                    ) : (
                      <button
                        disabled={item.state === "disabled"}
                        className="block h-[68px] w-full bg-[#5d3389] px-6 pb-[2px] text-left text-shadow-xs disabled:bg-[#ac99c4]"
                      >
                        {item.label}
                      </button>
                    )}
                  </li>
                ))}
              </ul>
            </div>
            <ActionButton className="gap-3 px-6 text-[28px]"><ChevronIcon />Zmień Status</ActionButton>
            <ActionButton>Anuluj zlecenie</ActionButton>
            <ActionButton className="gap-3 border-2 border-[#bdbdbd] px-6 text-[34px] font-bold"><ChevronIcon className="mt-3 h-[22px] w-[34px]" />...</ActionButton>
          </div>

          <section>
            <PanelHeader title="TAGI" action="Zarządzaj tagami" />
            <div className="border-b-2 border-l-2 border-[#e2dcdf] px-4 pt-4 pb-[18px]">
              <input aria-label="Tagi" placeholder="..." className="block h-[68px] w-[370px] rounded-[4px] border-2 border-[#c1c1c1] bg-[#fafafa] px-[18px] placeholder:text-[#a3a3a3]" />
            </div>
          </section>

          <section>
            <PanelHeader title="ZADANIA" action="Dodaj Zadanie" />
            <div className="border-b-2 border-l-2 border-[#e2dcdf] px-[26px] pt-5 pb-4 leading-10">Brak zdefiniowanych zadań</div>
          </section>

          <section>
            <PanelHeader title="ŁADUNKI" />
            <div className="border-b-2 border-l-2 border-[#e2dcdf] pt-[22px] pr-[14px] pb-[22px] pl-4">
              <table className="w-full table-fixed text-left whitespace-nowrap">
                <colgroup>
                  <col className="w-[20.3%]" />
                  <col className="w-[37.1%]" />
                  <col className="w-[22.5%]" />
                  <col className="w-[17.5%]" />
                  <col />
                </colgroup>
                <thead className="text-[#222]">
                  <tr className="h-11">
                    {["Numer ładunku", "Klient", "Numer ładunku klienta", "Kwota", "Fa"].map((name) => (
                      <th key={name} className="overflow-hidden border-l-2 border-[#c9c9c9] pl-6 leading-10 font-normal first:border-transparent">{name}</th>
                    ))}
                  </tr>
                </thead>
                <tbody>
                  <tr>
                    <td className="pt-[10px] pl-[14px]">
                      <div className="flex items-center gap-[10px] leading-10">
                        <button className="bg-[#5d3389] px-4 text-[28px] text-white text-shadow-xs">Pokaż</button>
                        0007/10/2024
                      </div>
                    </td>
                    <td className="pt-[10px] pl-[14px]">
                      <div className="flex items-center gap-[10px] leading-10">
                        <button className="flex items-center gap-3 bg-[#5d3389] px-4 text-[28px] text-white text-shadow-xs">
                          <ChevronIcon />Wyślij e-mail
                        </button>
                        fireTMS (Imię Naziwsko )
                      </div>
                    </td>
                    <td className="pt-[10px] pl-[14px]">
                      <button aria-label="Edytuj" className="flex h-10 w-[68px] items-center justify-center bg-[#5d3389] text-white">
                        <EditIcon />
                      </button>
                    </td>
                    <td className="pt-[10px] pl-[14px]">
                      <div className="flex items-center gap-[10px] leading-10">
                        <button aria-label="Rozwiń" className="flex h-10 w-[72px] items-center justify-center border-2 border-[#c1c1c1] bg-[#efefef] text-[#505050]">
                          <TriangleIcon />
                        </button>
                        1 000,00 EUR
                      </div>
                    </td>
                    <td className="overflow-hidden pt-[10px] pl-[14px]">
                      <label className="relative flex size-[38px] items-center border-2 border-[#e2dcdf] pl-1 text-[#5d3389]">
                        <input type="checkbox" defaultChecked aria-label="Faktura" className="absolute inset-0 appearance-none" />
                        <FaCheck size={26} className="shrink-0" />
                      </label>
                    </td>
                  </tr>
                </tbody>
              </table>
            </div>
          </section>

          <section className="flex min-h-0 flex-1 flex-col">
            <PanelHeader title="TRASA" />
            <div className="flex min-h-0 flex-1 flex-col gap-6 border-l-2 border-[#e2dcdf] pt-4 pr-[14px] pl-4">
              <div className="flex">
                <ActionButton>Edytuj trasę</ActionButton>
              </div>
              <div className="relative min-h-0 flex-1 overflow-hidden">
                <RouteMap />
                <div className="absolute top-[21px] left-[21px] flex w-[66px] flex-col rounded-[6px] border-4 border-[#c4c4c4] bg-white">
                  <button aria-label="Przybliż" className="flex h-[62px] items-center justify-center border-b-2 border-[#c4c4c4]">
                    <svg width="26" height="26" viewBox="0 0 26 26"><path d="M13 1V25M1 13H25" stroke="#000" strokeWidth="4" /></svg>
                  </button>
                  <button aria-label="Oddal" className="flex h-[60px] items-center justify-center pt-1">
                    <svg width="26" height="26" viewBox="0 0 26 26"><path d="M1 13H25" stroke="#000" strokeWidth="4" /></svg>
                  </button>
                </div>
                <div className="absolute bottom-0 left-0 w-[524px]">
                  <button aria-label="Warstwy" className="flex h-[68px] w-[102px] items-center justify-center bg-[#efefef]">
                    <svg width="54" height="50" viewBox="0 0 54 50">
                      <path d="M27 1L53 14L27 27L1 14Z" fill="#333" />
                      <path d="M10 20.500L3 25L27 37L51 25L44 20.500M10 32L3 36.500L27 48L51 36.500L44 32" fill="none" stroke="#333" strokeWidth="3" />
                    </svg>
                  </button>
                  <dl className="flex h-[37px] gap-[56px] bg-white pl-[27px] leading-10">
                    <dt>Długość trasy [km]</dt>
                    <dd>313,31</dd>
                  </dl>
                </div>
              </div>
            </div>
          </section>
        </div>
      </main>

      {/* Chat widgets */}
      <button className="absolute right-[187px] bottom-1 z-20 flex h-[82px] w-[522px] items-center justify-between rounded-t-[18px] border-2 border-b-0 border-[#a5a5a5] bg-[#431e45] px-7 text-[28px] text-white">
        Rozpocznij czat
        <svg width="28" height="28" viewBox="0 0 28 28">
          <circle cx="14" cy="14" r="14" fill="#fff" />
          <path d="M14 6V22M6 14H22" stroke="#431e45" strokeWidth="4" />
        </svg>
      </button>
      <button aria-label="Czat" className="absolute -right-[30px] bottom-[10px] z-20 flex size-[116px] items-center rounded-full bg-[#431e45] pl-[34px] shadow-lg">
        <svg width="48" height="36" viewBox="0 0 48 36">
          <path d="M9 0H39A9 9 0 0 1 48 9V27A9 9 0 0 1 39 36H3A3 3 0 0 1 0 33V9A9 9 0 0 1 9 0Z" fill="#fff" />
          <path d="M10 12.500H38M10 24H27" stroke="#431e45" strokeWidth="4" strokeLinecap="round" />
        </svg>
      </button>
    </div>
  );
};

export default App;
